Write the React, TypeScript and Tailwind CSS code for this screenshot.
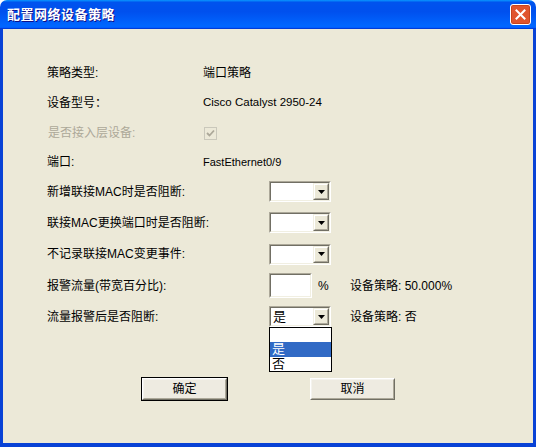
import React from 'react';

const Sunken: React.FC<{ className?: string; children?: React.ReactNode }> = ({ className = '', children }) => (
    <div className={`border border-t-[#ACA899] border-l-[#ACA899] border-r-white border-b-white ${className}`}>
        <div className="flex h-full w-full border border-t-[#716F64] border-l-[#716F64] border-r-[#F1EFE2] border-b-[#F1EFE2] bg-white">
            {children}
        </div>
    </div>
);

const Arrow = () => (
    <div className="border border-t-[#F1EFE2] border-l-[#F1EFE2] border-r-[#716F64] border-b-[#716F64]">
        <div className="flex h-full w-[14px] items-center justify-center border border-t-white border-l-white border-r-[#ACA899] border-b-[#ACA899] bg-[#ECE9D8]">
            <svg width="7" height="4" viewBox="0 0 7 4">
                <path d="M0 0h7L3.5 4z" fill="#000" />
            </svg>
        </div>
    </div>
);

const Select: React.FC<{ value?: string }> = ({ value }) => (
    <Sunken className="h-[21px] w-[62px]">
        <div className="flex-1 pl-[2px] text-[13px] leading-[17px]">{value}</div>
        <Arrow />
    </Sunken>
);

const Button: React.FC<{ label: string; isDefault?: boolean }> = ({ label, isDefault }) => (
    <div className={`h-[24px] w-[87px] border ${isDefault ? 'border-black' : 'border-[#ECE9D8]'}`}>
        <div className="h-full w-full border border-t-white border-l-white border-r-[#716F64] border-b-[#716F64]">
            <div className="flex h-full w-full items-center justify-center border border-t-[#F4F3EE] border-l-[#F4F3EE] border-r-[#ACA899] border-b-[#ACA899] bg-[#EEEBE1] text-[12px]">
                {label}
            </div>
        </div>
    </div>
);

export default function App() {
    return (
        <div className="flex h-[447px] w-[536px] flex-col overflow-hidden rounded-t-[7px] font-['Liberation_Sans','Noto_Sans_CJK_SC',sans-serif] text-[12px] text-black">
            {/* title bar */}
            <div className="flex h-[29px] shrink-0 items-center justify-between bg-[linear-gradient(180deg,#0997ff,#0053ee_8%,#0050ee_40%,#0066ff_88%,#0066ff_93%,#005bff_95%,#003dd7_96%,#003dd7)] pl-[7px] pr-[5px]">
                <span className="text-[13px] font-bold tracking-[0.5px] text-white [text-shadow:1px_1px_#0f1089]">配置网络设备策略</span>
                <div className="flex h-[21px] w-[21px] items-center justify-center rounded-[3px] border border-white bg-[#E0542D] shadow-[inset_0_0_0_1px_#c8431c]">
                    <svg width="11" height="11" viewBox="0 0 11 11">
                        <path d="M1.5 1.5l8 8M9.5 1.5l-8 8" stroke="#fff" strokeWidth="2" strokeLinecap="square" />
                    </svg>
                </div>
            </div>

            {/* body */}
            <div className="flex flex-1 flex-col border-x-[3px] border-b-[4px] border-[#0842D6] bg-[#ECE9D8] pl-[44px] pt-[29px]">
                <div className="flex h-[30px] items-center">
                    <div className="w-[156px]">策略类型:</div>
                    <div>端口策略</div>
                </div>
                <div className="flex h-[30px] items-center">
                    <div className="w-[156px]">设备型号：</div>
                    <div className="text-[11.5px]">Cisco Catalyst 2950-24</div>
                </div>
                <div className="flex h-[30px] items-center">
                    <div className="w-[157px] pl-[1px] text-[#ACA899]">是否接入层设备:</div>
                    <div className="flex h-[13px] w-[13px] items-center justify-center border border-[#CAC8BB] bg-[#ECE9D8]">
                        <svg width="9" height="9" viewBox="0 0 9 9">
                            <path d="M1 4l2.5 2.5L8 1.5" stroke="#ACA899" strokeWidth="1.8" fill="none" />
                        </svg>
                    </div>
                </div>
                <div className="flex h-[28px] items-center">
                    <div className="w-[156px]">端口:</div>
                    <div className="text-[11px]">FastEthernet0/9</div>
                </div>
                <div className="flex h-[31px] items-center">
                    <div className="w-[222px]">新增联接MAC时是否阻断:</div>
                    <Select />
                </div>
                <div className="flex h-[31px] items-center">
                    <div className="w-[222px]">联接MAC更换端口时是否阻断:</div>
                    <Select />
                </div>
                <div className="flex h-[32px] items-center">
                    <div className="w-[222px]">不记录联接MAC变更事件:</div>
                    <Select />
                </div>
                <div className="flex h-[31px] items-center">
                    <div className="w-[222px]">报警流量(带宽百分比):</div>
                    <div className="flex w-[81px] items-center">
                        <Sunken className="h-[25px] w-[43px]" />
                        <span className="ml-[6px] text-[12px]">%</span>
                    </div>
                    <div>
                        设备策略: <span className="text-[12px]">50.000%</span>
                    </div>
                </div>
                <div className="flex h-[31px] items-center">
                    <div className="w-[222px]">流量报警后是否阻断:</div>
                    <div className="w-[81px]">
                        <div className="relative w-[62px]">
                            <Select value="是" />
                            <div className="absolute left-0 top-full z-10 w-[63px] border border-black bg-white text-[13px] leading-[14px]">
                                <div className="h-[14px]" />
                                <div className="h-[15px] bg-[#316AC5] pl-[2px] text-white">是</div>
                                <div className="h-[14px] pl-[2px]">否</div>
                            </div>
                        </div>
                    </div>
                    <div>设备策略: 否</div>
                </div>

                <div className="mt-[45px] flex gap-[81px] pl-[94px]">
                    <Button label="确定" isDefault />
                    <Button label="取消" />
                </div>
            </div>
        </div>
    );
}
